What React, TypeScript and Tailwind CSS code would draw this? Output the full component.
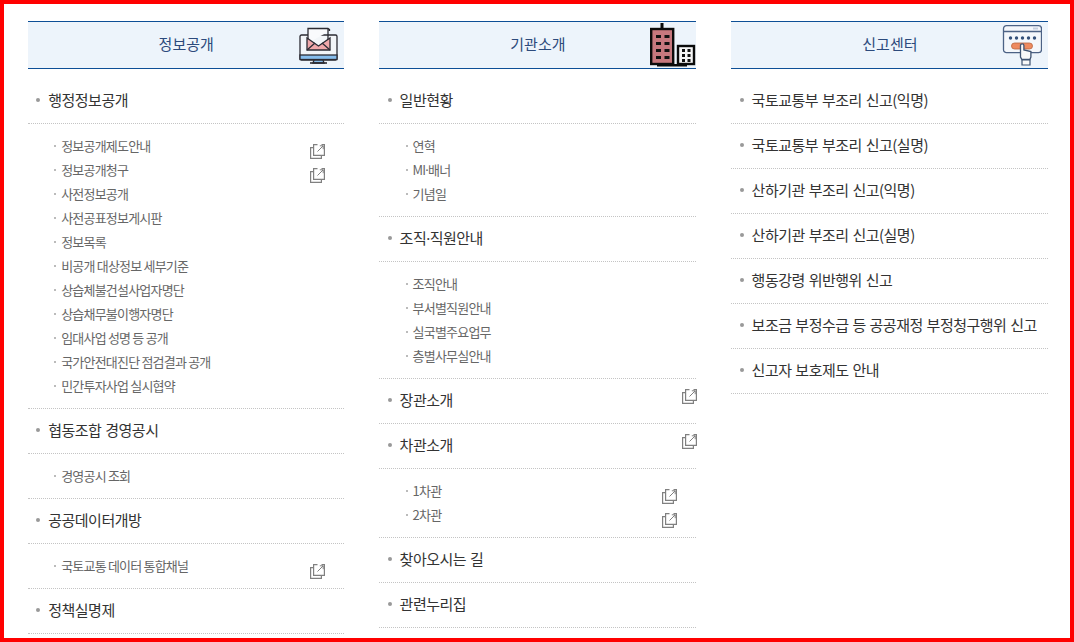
const Ext = ({ cls }: { cls: string }) => (
  <svg className={`absolute ${cls}`} width="15" height="15" viewBox="0 0 15 15" fill="none" stroke="#808080" strokeWidth="1.2">
    <path d="M3.6 3.6H.6V14.4H11.4V11.4" />
    <path d="M7.5.6H3.6V11.4H14.4V.6H11.5" />
    <path d="M7.5 7.5L13 2M9.8 1.8H13.2V5.2" strokeWidth="1" />
  </svg>
);

type Sub = { t: string; ext?: boolean };
type Item = { t: string; ext?: boolean; subs?: Sub[] };

const Label = ({ t }: { t: string }) => {
  const parts = t.split("·");
  if (parts.length === 1) return <span>{t}</span>;
  return (
    <span>
      {parts[0]}
      <span className="leading-[0]" style={{ fontFamily: '"Noto Sans", sans-serif' }}>·</span>
      {parts[1]}
    </span>
  );
};

const Mail = () => (
  <svg className="absolute right-[5px] top-[5px]" width="40" height="38" viewBox="0 0 40 38" fill="none" stroke="#2b2b33" strokeWidth="1.3">
    <rect x="1" y="8" width="37" height="25" rx="1.5" fill="#f2f5f8" />
    <rect x="1" y="28" width="37" height="4.5" fill="#86bdec" />
    <path d="M15 33h9l1 3h-11z" fill="#86bdec" />
    <path d="M11 36h17" strokeWidth="1.6" />
    <path d="M9 16V1.5h20l1.5 1v1.5M29 2v14" fill="#f9fafc" />
    <path d="M8 11l11.5 8L31 11v12H8z" fill="#f0a8aa" />
    <path d="M8 23l8-7M31 23l-8-7" />
  </svg>
);

const Building = () => (
  <svg className="absolute right-0 top-[1px]" width="47" height="44" viewBox="0 0 47 44">
    <rect x="11.5" y="0" width="3" height="6" fill="#0b0b0b" />
    <rect x="2.2" y="6" width="22" height="35" fill="#c7787e" stroke="#0b0b0b" strokeWidth="2.4" />
    <g fill="#111">
      <rect x="7" y="12" width="5" height="3" /><rect x="15.5" y="12" width="5" height="3" />
      <rect x="7" y="19" width="5" height="3" /><rect x="15.5" y="19" width="5" height="3" />
      <rect x="7" y="26" width="5" height="3" /><rect x="15.5" y="26" width="5" height="3" />
      <rect x="7" y="33" width="5" height="3" /><rect x="15.5" y="33" width="5" height="3" />
    </g>
    <rect x="29" y="23" width="16" height="18" fill="#f6f6f6" stroke="#0b0b0b" strokeWidth="2.4" />
    <g fill="#111">
      <rect x="33" y="26" width="3" height="3" /><rect x="38.5" y="26" width="3" height="3" />
      <rect x="33" y="31" width="3" height="3" /><rect x="38.5" y="31" width="3" height="3" />
      <rect x="33" y="36" width="3" height="3" /><rect x="38.5" y="36" width="3" height="3" />
    </g>
    <rect x="8" y="41" width="30" height="2.5" fill="#0b0b0b" />
  </svg>
);

const Pass = () => (
  <svg className="absolute right-[6px] top-[3px]" width="40" height="41" viewBox="0 0 40 41" fill="none">
    <rect x="1.5" y=".7" width="38" height="27" rx="3" fill="#f4f7fb" stroke="#4c6285" strokeWidth="1.3" />
    <path d="M1.5 6.5h38" stroke="#4c6285" strokeWidth="1.3" />
    <rect x="31" y="2.5" width="5" height="2" fill="#c5d0e0" />
    <g fill="#34507a">
      <circle cx="8.5" cy="13" r="1.7" /><circle cx="14.5" cy="13" r="1.7" /><circle cx="20.5" cy="13" r="1.7" /><circle cx="26.5" cy="13" r="1.7" /><circle cx="32.5" cy="13" r="1.7" />
    </g>
    <rect x="9.5" y="18" width="21" height="6" rx="3" fill="#ee8a5f" stroke="#b9663f" strokeWidth="0.8" />
    <path d="M18.5 32V20.5a1.7 1.7 0 0 1 3.4 0V25l7 1.5V32l-1 2.5h-8z" fill="#f8f8f8" stroke="#3f5371" strokeWidth="1.3" />
    <path d="M20 35h8v5h-8z" fill="#f8f8f8" stroke="#3f5371" strokeWidth="1.2" />
  </svg>
);

const Row = ({ item }: { item: Item }) => (
  <div>
    <div className="relative h-[45px] border-b border-dotted border-[#c4c4c4] flex items-center pl-[8.2px] text-[15px] text-[#333] leading-none pb-[4px] tracking-[-0.5px] [word-spacing:1px] whitespace-nowrap">
      <span className="w-[4px] h-[4px] mt-[2px] mr-[8px] rounded-full bg-[#999]" />
      <Label t={item.t} />
      {item.ext && <Ext cls="right-[-0.2px] top-[10px]" />}
    </div>
    {item.subs && (
      <ul className="py-[10px] border-b border-dotted border-[#c4c4c4]">
        {item.subs.map((s) => (
          <li key={s.t} className="relative h-[24px] flex items-center pl-[26.2px] pb-[1px] text-[13px] text-[#666] tracking-[-0.8px] whitespace-nowrap">
            <span className="w-[2px] h-[2px] mr-[5px] bg-[#bbb]" />
            <Label t={s.t} />
            {s.ext && <Ext cls="right-[19.6px] top-[10px]" />}
          </li>
        ))}
      </ul>
    )}
  </div>
);

const Col = ({ title, icon, items, cls }: { title: string; icon: React.ReactNode; items: Item[]; cls: string }) => (
  <section className={`${cls} shrink-0`}>
    <div className="relative h-[48px] border-y border-[#0d4f96] bg-[#edf4fb] flex items-center justify-center pb-[2px] text-[15px] text-[#2c4a7c]">
      {title}
      {icon}
    </div>
    <div className="mt-[10px]">
      {items.map((i) => (
        <Row key={i.t} item={i} />
      ))}
    </div>
  </section>
);

const c1: Item[] = [
  {
    t: "행정정보공개",
    subs: [
      { t: "정보공개제도안내", ext: true },
      { t: "정보공개청구", ext: true },
      { t: "사전정보공개" },
      { t: "사전공표정보게시판" },
      { t: "정보목록" },
      { t: "비공개 대상정보 세부기준" },
      { t: "상습체불건설사업자명단" },
      { t: "상습채무불이행자명단" },
      { t: "임대사업 성명 등 공개" },
      { t: "국가안전대진단 점검결과 공개" },
      { t: "민간투자사업 실시협약" },
    ],
  },
  { t: "협동조합 경영공시", subs: [{ t: "경영공시 조회" }] },
  { t: "공공데이터개방", subs: [{ t: "국토교통 데이터 통합채널", ext: true }] },
  { t: "정책실명제" },
];

const c2: Item[] = [
  { t: "일반현황", subs: [{ t: "연혁" }, { t: "MI·배너" }, { t: "기념일" }] },
  { t: "조직·직원안내", subs: [{ t: "조직안내" }, { t: "부서별직원안내" }, { t: "실국별주요업무" }, { t: "층별사무실안내" }] },
  { t: "장관소개", ext: true },
  { t: "차관소개", ext: true, subs: [{ t: "1차관", ext: true }, { t: "2차관", ext: true }] },
  { t: "찾아오시는 길" },
  { t: "관련누리집" },
];

const c3: Item[] = [
  { t: "국토교통부 부조리 신고(익명)" },
  { t: "국토교통부 부조리 신고(실명)" },
  { t: "산하기관 부조리 신고(익명)" },
  { t: "산하기관 부조리 신고(실명)" },
  { t: "행동강령 위반행위 신고" },
  { t: "보조금 부정수급 등 공공재정 부정청구행위 신고" },
  { t: "신고자 보호제도 안내" },
];

export default function App() {
  return (
    <div
      className="h-[642px] w-[1074px] overflow-hidden border-4 border-[#ff0000] bg-white pt-[17px] pl-[24px] flex gap-[35px]"
      style={{ fontFamily: '"Noto Sans CJK KR", "Noto Sans", sans-serif' }}
    >
      <Col cls="w-[316.4px]" title="정보공개" icon={<Mail />} items={c1} />
      <Col cls="w-[317px]" title="기관소개" icon={<Building />} items={c2} />
      <Col cls="w-[317px]" title="신고센터" icon={<Pass />} items={c3} />
    </div>
  );
}
